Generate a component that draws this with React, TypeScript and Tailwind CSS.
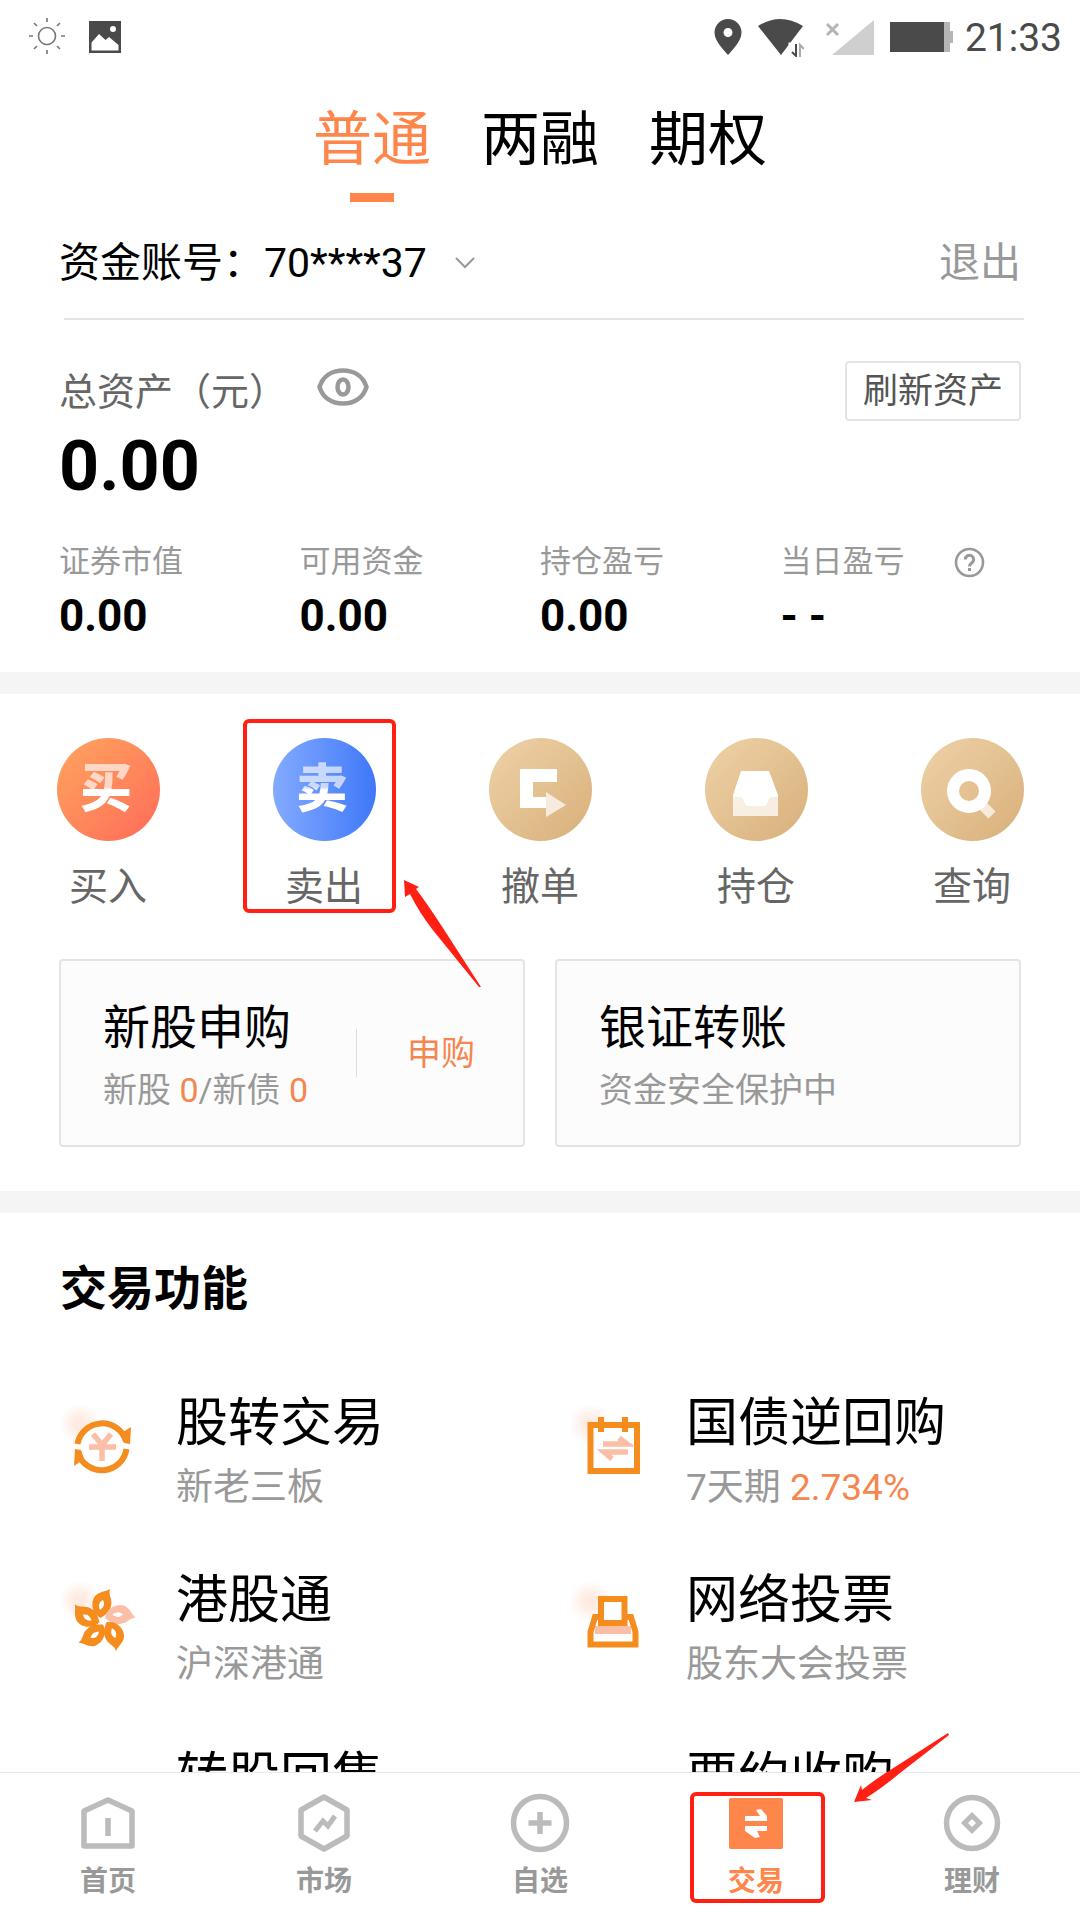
import { useState } from "react";
import type { ReactNode } from "react";
import clsx from "clsx";

/* ---------- status bar ---------- */

function StatusBar() {
  return (
    <header className="flex h-18 items-center justify-between pl-7 pr-[18px] pt-0.5 text-[#4a4a4a]">
      <div className="flex items-center gap-[21px]">
        <svg className="h-10 w-10" viewBox="0 0 40 40" fill="none" stroke="#777" strokeWidth="1.6">
          <circle cx="19" cy="19" r="8.5" />
          <path d="M19 1v4M19 33v4M1 19h4M33 19h4M6 6l3 3M29 29l3 3M32 6l-3 3M9 29l-3 3" />
        </svg>
        <svg className="h-8 w-8" viewBox="0 0 32 32">
          <path fill="currentColor" d="M0 0h32v32H0z" />
          <circle cx="24" cy="8" r="3" fill="#fff" />
          <path fill="#fff" d="M2.500 29.500v-8L10 13l6.500 6 3.500-3 9.500 8v5.500z" />
        </svg>
      </div>
      <div className="flex items-center">
        <svg className="h-9 w-7" viewBox="0 0 28 36">
          <path
            fill="currentColor"
            fillRule="evenodd"
            d="M14 0a13.500 13.500 0 0 1 13.500 13.500C27.500 22 19 30 14 36 9 30 .5 22 .5 13.500A13.500 13.500 0 0 1 14 0zm0 9a4.500 4.500 0 1 0 0 9 4.500 4.500 0 0 0 0-9z"
          />
        </svg>
        <svg className="ml-4 h-10 w-[46px]" viewBox="0 0 46 40">
          <path fill="currentColor" d="M0 9Q22-5 45 9L23 38z" />
          <path fill="none" stroke="#fff" strokeWidth="3" d="M32 40V27h14" />
          <path fill="none" stroke="currentColor" strokeWidth="2" d="M38 27v12l-4-4" />
          <path fill="none" stroke="#aaa" strokeWidth="2" d="M42 40V28l4 4" />
        </svg>
        <svg className="ml-5 h-9 w-[50px]" viewBox="0 0 50 36">
          <path fill="none" stroke="#b5b5b5" strokeWidth="3" d="M3 5l11 11M14 5L3 16" />
          <path fill="#cfcfcf" d="M50 1v35H8z" />
        </svg>
        <svg className="ml-4 h-[30px] w-[63px]" viewBox="0 0 63 30">
          <path fill="currentColor" d="M0 0h54v30H0z" />
          <path fill="#b5b5b5" d="M54 0h6v9h3v12h-3v9h-6z" />
        </svg>
        <span className="ml-3 pt-0.5 text-[39px] leading-[48px]">21:33</span>
      </div>
    </header>
  );
}

/* ---------- hand-drawn pointers ---------- */

function Highlight({ className }: { className: string }) {
  return (
    <span
      className={clsx("pointer-events-none absolute z-10 rounded-md border-4 border-[#ff2013]", className)}
    />
  );
}

function ArrowUpLeft() {
  return (
    <svg
      className="pointer-events-none absolute left-[188px] top-[142px] z-10 h-[108px] w-[77px]"
      viewBox="0 0 77 108"
    >
      <path fill="#ff2013" d="M0 0L15 7L12 9Q22 22 37 45L77 107L75 107L28 49Q15 32 6 14L1 17z" />
    </svg>
  );
}

function ArrowDownLeft() {
  return (
    <svg
      className="pointer-events-none absolute -top-10 left-[206px] z-10 h-[70px] w-24"
      viewBox="0 0 96 70"
    >
      <path fill="#ff2013" d="M0 69L7 52L8 57Q20 47 41 34L94 0L95 2L46 40Q28 55 12 65L18 67z" />
    </svg>
  );
}

/* ---------- account ---------- */

const TABS = ["普通", "两融", "期权"];

function AccountTabs() {
  const [active, setActive] = useState(0);
  return (
    <div className="flex justify-center gap-[50px] pt-[38px]" role="tablist">
      {TABS.map((tab, i) => (
        <button
          key={tab}
          role="tab"
          aria-selected={i === active}
          onClick={() => setActive(i)}
          className={clsx(
            "flex flex-col items-center text-[59px] leading-[60px]",
            i === active ? "text-[#ff864a]" : "text-black"
          )}
        >
          {tab}
          <span className={clsx("mt-[23px] h-[9px] w-11", i === active && "bg-[#ff864a]")} />
        </button>
      ))}
    </div>
  );
}

const STATS = [
  { label: "证券市值", value: "0.00" },
  { label: "可用资金", value: "0.00" },
  { label: "持仓盈亏", value: "0.00" },
  { label: "当日盈亏", value: "- -", help: true },
];

function AccountSummary() {
  return (
    <section>
      <div className="flex h-[116px] items-center justify-between px-[59px] pt-1.5">
        <button className="flex items-center text-[41px] leading-[48px] text-black">
          <span>资金账号：70****37</span>
          <svg className="ml-7 h-3 w-5" viewBox="0 0 20 12" fill="none" stroke="#999" strokeWidth="2">
            <path d="M1 1l9 9 9-9" />
          </svg>
        </button>
        <button className="text-[41px] leading-[48px] text-[#999]">退出</button>
      </div>
      <div className="ml-16 mr-14 h-0.5 bg-[#e4e4e4]" />

      <div className="flex items-center justify-between px-[59px] pt-[41px]">
        <div className="flex items-center gap-[30px]">
          <span className="pt-0.5 text-[38px] leading-[48px] text-[#666]">总资产（元）</span>
          <button aria-label="隐藏金额">
            <svg className="h-[46px] w-[52px] pb-2" viewBox="0 0 52 38" fill="none" stroke="#999">
              <path strokeWidth="4.500" d="M2.500 19C6 8 15 2.500 26 2.500S46 8 49.500 19C46 30 37 35.500 26 35.500S6 30 2.500 19z" />
              <ellipse cx="26" cy="19" rx="5.500" ry="7.500" strokeWidth="4.500" />
            </svg>
          </button>
        </div>
        <button className="h-15 rounded-sm border-2 border-[#e4e4e4] px-4 pt-0.5 text-[35px] leading-[48px] text-[#555]">
          刷新资产
        </button>
      </div>
      <p className="mt-2.5 px-[59px] text-[70px] font-bold leading-[70px] text-black">0.00</p>

      <dl className="mt-[41px] grid grid-cols-4 px-[59px] pb-8">
        {STATS.map((s) => (
          <div key={s.label}>
            <dt className="flex items-center text-[31px] leading-10 text-[#999]">
              {s.label}
              {s.help && (
                <button aria-label="说明" className="ml-[49px]">
                  <svg className="h-[31px] w-[31px]" viewBox="0 0 31 31" fill="none" stroke="#999">
                    <circle cx="15.500" cy="15.500" r="13.500" strokeWidth="2.600" />
                    <path strokeWidth="3" d="M11.300 12.500a4.200 4.200 0 1 1 6.500 3.500c-1.600 1-2.300 1.700-2.300 3.500M15.500 21v3" />
                  </svg>
                </button>
              )}
            </dt>
            <dd className="mt-2.5 text-[44px] font-bold leading-[48px] text-black">{s.value}</dd>
          </div>
        ))}
      </dl>
    </section>
  );
}

/* ---------- quick actions ---------- */

function ActionGlyph({ children }: { children: string }) {
  return (
    <span className="bg-linear-to-b from-white/65 from-45% to-white to-50% bg-clip-text pr-1 text-[52px] font-black leading-[60px] text-transparent">
      {children}
    </span>
  );
}

function CancelIcon() {
  return (
    <svg className="h-full w-full" viewBox="0 0 103 103" fill="#fff">
      <path d="M31 31h37v13H44v15h13v11H31z" />
      <path d="M57 54l20 13-20 12z" opacity=".7" />
    </svg>
  );
}

function HoldingIcon() {
  return (
    <svg className="h-full w-full" viewBox="0 0 103 103" fill="#fff">
      <path d="M36 33h28l9 24v2h-7l-5 9H41l-5-9h-8v-2z" />
      <path d="M28 59h8l5 9h20l5-9h7v19H28z" opacity=".75" />
    </svg>
  );
}

function SearchIcon() {
  return (
    <svg className="h-full w-full" viewBox="0 0 103 103" fill="none" stroke="#fff">
      <circle cx="48" cy="53" r="16" strokeWidth="12" />
      <path d="M62 68l9 9" strokeWidth="10" opacity=".7" />
    </svg>
  );
}

const GOLD = "bg-linear-to-br from-[#efd2a8] to-[#d8b07a]";

const ACTIONS: { label: string; bg: string; icon: ReactNode; marked?: boolean }[] = [
  { label: "买入", bg: "bg-linear-to-br from-[#ffa45f] to-[#ff6a58]", icon: <ActionGlyph>买</ActionGlyph> },
  {
    label: "卖出",
    bg: "bg-linear-to-r from-[#84aaff] to-[#3f77f8]",
    icon: <ActionGlyph>卖</ActionGlyph>,
    marked: true,
  },
  { label: "撤单", bg: GOLD, icon: <CancelIcon /> },
  { label: "持仓", bg: GOLD, icon: <HoldingIcon /> },
  { label: "查询", bg: GOLD, icon: <SearchIcon /> },
];

function QuickActions() {
  return (
    <div className="grid grid-cols-5 pt-11">
      {ACTIONS.map((a) => (
        <button key={a.label} className="relative flex flex-col items-center">
          <span className={clsx("flex h-[103px] w-[103px] items-center justify-center rounded-full", a.bg)}>
            {a.icon}
          </span>
          <span className="mt-6 text-[39px] leading-[44px] text-[#666]">{a.label}</span>
          {a.marked && (
            <>
              <Highlight className="-top-[19px] left-[27px] h-[194px] w-[153px]" />
              <ArrowUpLeft />
            </>
          )}
        </button>
      ))}
    </div>
  );
}

function PromoCards() {
  return (
    <div className="mt-[50px] grid grid-cols-2 gap-[30px] px-[59px] pb-11">
      <div className="flex h-[188px] items-center justify-between rounded-sm border-2 border-[#e4e4e4] bg-[#fcfcfc] pl-[42px] pr-12">
        <div className="pt-1">
          <h3 className="text-[47px] leading-[56px] text-black">新股申购</h3>
          <p className="mt-3.5 text-[34px] leading-10 text-[#999]">
            新股 <span className="text-[#f5864f]">0</span>/新债 <span className="text-[#f5864f]">0</span>
          </p>
        </div>
        <button className="flex items-center gap-[50px] text-[34px] leading-10 text-[#f5864f]">
          <span className="h-12 w-px bg-[#ddd]" />
          申购
        </button>
      </div>
      <button className="flex h-[188px] flex-col justify-center rounded-sm border-2 border-[#e4e4e4] bg-[#fcfcfc] px-[42px] pt-1 text-left">
        <span className="text-[47px] leading-[56px] text-black">银证转账</span>
        <span className="mt-3.5 text-[34px] leading-10 text-[#999]">资金安全保护中</span>
      </button>
    </div>
  );
}

/* ---------- trading functions ---------- */

function FeatureIcon({ children }: { children: ReactNode }) {
  return (
    <svg className="h-19 w-19" viewBox="0 0 76 76" fill="none">
      <defs>
        <radialGradient id="blush">
          <stop offset="0.200" stopColor="#fddccb" stopOpacity="0.600" />
          <stop offset="1" stopColor="#fddccb" stopOpacity="0" />
        </radialGradient>
      </defs>
      <circle cx="20" cy="22" r="21" fill="url(#blush)" />
      {children}
    </svg>
  );
}

function ExchangeIcon() {
  return (
    <FeatureIcon>
      <circle cx="42" cy="45" r="22" fill="#fff" />
      <g stroke="#f58c1e" strokeWidth="6">
        <path d="M17.500 42A25 25 0 0 1 66 39M66.500 47A25 25 0 0 1 18 51" />
      </g>
      <path fill="#f58c1e" d="M71 25l-1 17-6-1-4-9zM14 64l1-17 6 1 3 9z" />
      <path stroke="#fabfa6" strokeWidth="5.500" d="M33 32l9 11 9-11M29 45h27M42 43v16" />
    </FeatureIcon>
  );
}

function BondIcon() {
  return (
    <FeatureIcon>
      <rect x="20.500" y="23" width="46.500" height="46" fill="#fff" stroke="#f58c1e" strokeWidth="6" />
      <path stroke="#f58c1e" strokeWidth="6" d="M31 15v15M55 15v15" />
      <path stroke="#fabfa6" strokeWidth="5.500" d="M33 42h24l-8-6M58 50H34l8 7" />
    </FeatureIcon>
  );
}

const PETAL_ANGLES = [0, 72, 144, 216, 288];

function BauhiniaIcon() {
  return (
    <FeatureIcon>
      {PETAL_ANGLES.map((angle) => (
        <g key={angle} transform={`rotate(${angle} 43 42)`}>
          <path
            fill={angle === 72 ? "#fabfa6" : "#f58c1e"}
            d="M41 39C32 35 30 24 35 17C40 12 45 13 50 10C48 16 53 20 51 27C50 33 45 36 41 39z"
          />
          <path fill="#fff" d="M40 31C38 27 39 23 43 21C45 25 44 28 40 31z" />
        </g>
      ))}
    </FeatureIcon>
  );
}

function VoteIcon() {
  return (
    <FeatureIcon>
      <path fill="#fff" stroke="#f58c1e" strokeWidth="6" d="M32 38h-7l-4.500 15v12.500h45V53L61 38h-7" />
      <path fill="#fabfa6" d="M25 47h36v8H25z" />
      <rect x="31" y="20" width="23.500" height="24" fill="#fff" stroke="#f58c1e" strokeWidth="6" />
    </FeatureIcon>
  );
}

const FEATURES: { title: string; desc?: ReactNode; icon?: ReactNode }[] = [
  { title: "股转交易", desc: "新老三板", icon: <ExchangeIcon /> },
  {
    title: "国债逆回购",
    desc: (
      <>
        7天期 <span className="text-[#f5864f]">2.734%</span>
      </>
    ),
    icon: <BondIcon />,
  },
  { title: "港股通", desc: "沪深港通", icon: <BauhiniaIcon /> },
  { title: "网络投票", desc: "股东大会投票", icon: <VoteIcon /> },
  { title: "转股回售" },
  { title: "要约收购" },
];

function TradeFeatures() {
  return (
    <section className="pl-[60px] pt-12">
      <h2 className="text-[47px] font-bold leading-[56px] text-black">交易功能</h2>
      <div className="mt-[77px] grid grid-cols-2 gap-y-[61px]">
        {FEATURES.map((f) => (
          <a key={f.title} href="#" className="flex items-start gap-10">
            <span className="mt-2 w-19 shrink-0">{f.icon}</span>
            <span className="flex flex-col">
              <span className="text-[52px] leading-[60px] text-black">{f.title}</span>
              {f.desc && <span className="mt-3 text-[37px] leading-[44px] text-[#999]">{f.desc}</span>}
            </span>
          </a>
        ))}
      </div>
    </section>
  );
}

/* ---------- bottom navigation ---------- */

const NAV: { label: string; icon: ReactNode; active?: boolean }[] = [
  {
    label: "首页",
    icon: <path strokeLinejoin="round" d="M6 53V18L30 7l24 11v35zM30 25v18" />,
  },
  {
    label: "市场",
    icon: (
      <>
        <path strokeLinejoin="round" d="M30 4l23 13v26L30 56 7 43V17z" />
        <path strokeWidth="5" d="M21 38l8-10 5 5 7-10" />
      </>
    ),
  },
  {
    label: "自选",
    icon: (
      <>
        <circle cx="30" cy="30" r="26.500" />
        <path d="M18.500 30h23M30 19v22" />
      </>
    ),
  },
  {
    label: "交易",
    active: true,
    icon: (
      <>
        <rect x="3" y="5" width="54" height="51" rx="2" fill="#ff864a" stroke="none" />
        <path
          fill="#fff"
          stroke="none"
          d="M19 23h15l-4-6 5-1 6 7v5H19zM19 33h22v5H31l3 6-5 1-10-7z"
        />
      </>
    ),
  },
  {
    label: "理财",
    icon: (
      <>
        <circle cx="30" cy="30" r="25.500" />
        <path strokeWidth="5" d="M30 22.500l7.500 7.500-7.500 7.500-7.500-7.500z" />
      </>
    ),
  },
];

function BottomNav() {
  return (
    <nav className="relative grid h-[148px] shrink-0 grid-cols-5 items-start border-t border-[#e8e8e8] bg-white">
      {NAV.map((item) => (
        <a
          key={item.label}
          href="#"
          aria-current={item.active ? "page" : undefined}
          className="relative flex flex-col items-center pt-5"
        >
          <svg className="h-15 w-15" viewBox="0 0 60 60" fill="none" stroke="#bbb" strokeWidth="5.500">
            {item.icon}
          </svg>
          <span
            className={clsx(
              "mt-[11px] text-[28px] font-bold leading-9",
              item.active ? "text-[#ff864a]" : "text-[#999]"
            )}
          >
            {item.label}
          </span>
          {item.active && (
            <>
              <Highlight className="left-[42px] top-[19px] h-[111px] w-[135px]" />
              <ArrowDownLeft />
            </>
          )}
        </a>
      ))}
    </nav>
  );
}

export default function App() {
  return (
    <div className="flex h-screen flex-col bg-white font-['Roboto','Noto_Sans_CJK_SC',sans-serif]">
      <StatusBar />
      <main className="min-h-0 flex-1 overflow-hidden">
        <AccountTabs />
        <AccountSummary />
        <div className="h-[22px] bg-[#f5f5f5]" />
        <QuickActions />
        <PromoCards />
        <div className="h-[22px] bg-[#f5f5f5]" />
        <TradeFeatures />
      </main>
      <BottomNav />
    </div>
  );
}
